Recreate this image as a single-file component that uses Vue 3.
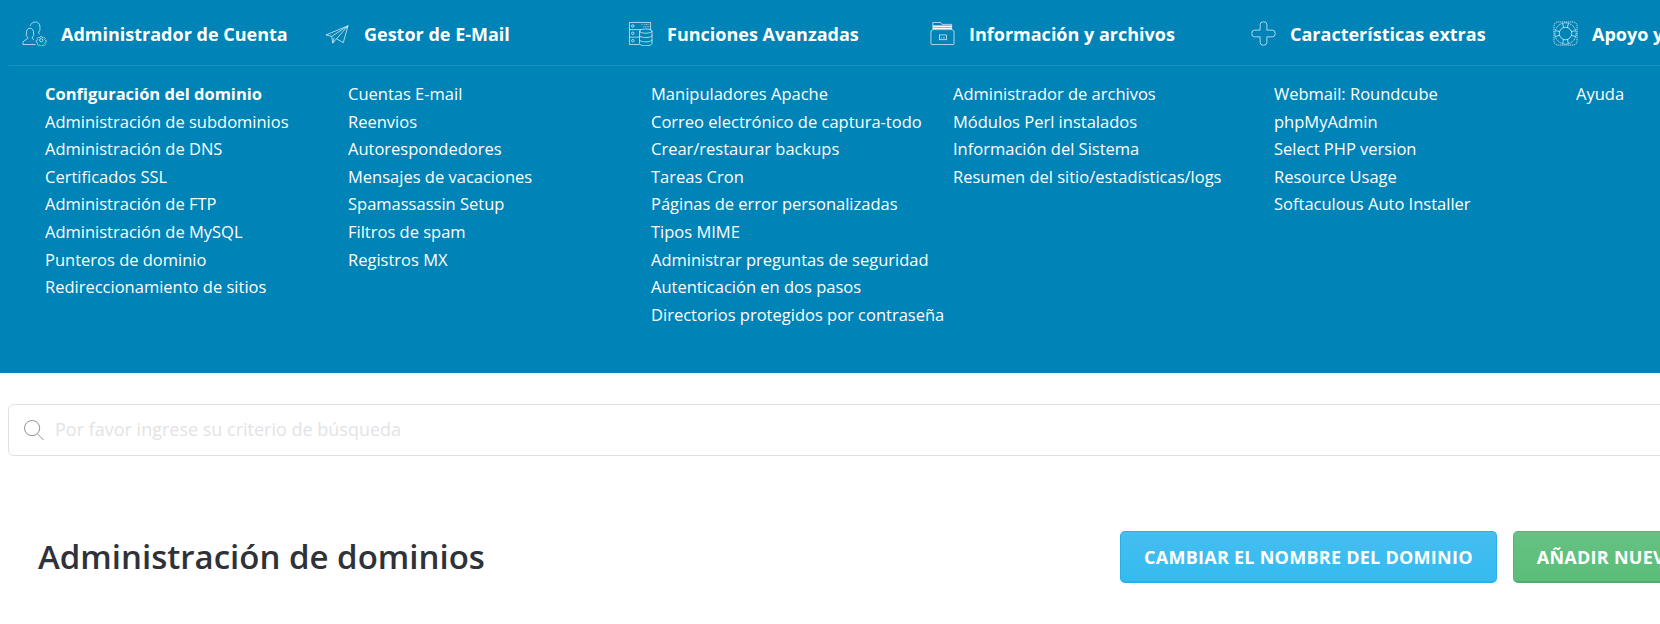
<template>
  <div class="page">
    <nav class="menu">
      <div class="menu-head cols">
        <div v-for="col in columns" :key="col.title" class="head-item">
          <svg class="head-icon" viewBox="0 0 26 26" fill="none" stroke="#fff" stroke-width="0.7">
            <template v-if="col.icon === 'users'">
              <path d="M1 24.500h13M1 24.500v-1.800c0-1.600 1.200-2.400 3.200-3.200 1.200-.5 1.800-1 1.800-1.800 0-.6-.5-1-1-2-.6-.4-.8-1.400-.4-2-.4-3.700 1-6.200 3.700-6.200s4.100 2.500 3.700 6.200c.4.600.2 1.600-.4 2-.4 1-1 1.400-1 2 0 .8.600 1.300 1.800 1.800" />
              <path d="M8.500 5C9.500 2.500 11.500 1 14 1c3.400 0 5 3 4.600 7 .4.600.3 1.500-.3 2-.4 1-1.100 1.500-1.100 2.300 0 .6.400 1 1.100 1.400" />
              <circle cx="20" cy="20" r="1.700" />
              <path d="M19 14.500h2l.4 1.400 1.200.5 1.300-.7 1.400 1.400-.7 1.300.5 1.200 1.400.4v2l-1.400.4-.5 1.200.7 1.300-1.400 1.400-1.300-.7-1.200.5-.4 1.100h-2l-.4-1.100-1.200-.5-1.300.7-1.400-1.400.7-1.300-.5-1.200-1.400-.4v-2l1.400-.4.5-1.200-.7-1.300 1.400-1.400 1.300.7 1.200-.5z" transform="translate(4 4.400) scale(.8)" />
            </template>
            <template v-else-if="col.icon === 'plane'">
              <path d="M1 14.500 24 5 19 22.500l-7-4-4 4.500-1-7z" />
              <path d="M24 5 7 16M24 5 12 18.500M8 23l1.500-5.500" />
            </template>
            <template v-else-if="col.icon === 'db'">
              <path d="M12 24.500H1.500v-23h22v8M1.500 9h12M1.500 16.800h10" />
              <circle cx="5" cy="5.200" r="1.300" />
              <circle cx="5" cy="12.800" r="1.300" />
              <circle cx="5" cy="20.500" r="1.300" />
              <path d="M14 3.500h1M16 6h6M17 3.500h5" stroke-dasharray="1 .7" />
              <ellipse cx="18.500" cy="10.500" rx="6.500" ry="2.200" />
              <path d="M12 10.500v13c0 1.300 3 2.200 6.500 2.200s6.500-.9 6.500-2.200v-13M12 15c0 1.300 3 2.200 6.500 2.200S25 16.300 25 15M12 19.500c0 1.300 3 2.200 6.500 2.200s6.500-.9 6.500-2.200" />
            </template>
            <template v-else-if="col.icon === 'folder'">
              <path d="M3 9V1.500h8l1.500 2h10V9" />
              <path d="M3 5.500h19.500M3 7.500h19.500" stroke-width="1.500" />
              <path d="M1 10.500 3 9h20l2 1.500v13a1 1 0 0 1-1 1H2a1 1 0 0 1-1-1z" />
              <rect x="10" y="14.500" width="7" height="5" />
              <path d="M11.500 17.500h1M13.500 17.500h2" />
            </template>
            <template v-else-if="col.icon === 'plus'">
              <path d="M9.500 3.500a3.500 2.700 0 0 1 7 0v6h6a2.700 3.500 0 0 1 0 7h-6v6a3.500 2.700 0 0 1-7 0v-6h-6a2.700 3.500 0 0 1 0-7h6z" />
            </template>
            <template v-else>
              <rect x="1" y="1" width="24" height="24" rx="4" stroke-dasharray="1.500 .6" />
              <circle cx="13" cy="13" r="6.500" />
              <circle cx="13" cy="13" r="11" stroke-dasharray="1.500 .5" />
              <path d="M10 2.500l1 4.500M16 2.500 15 7M10 23.500l1-4.500M16 23.500 15 19M2.500 10 7 11M2.500 16 7 15M23.500 10 19 11M23.500 16 19 15" />
            </template>
          </svg>
          <span class="head-title">{{ col.title }}</span>
        </div>
      </div>
      <div class="menu-body cols">
        <ul v-for="col in columns" :key="col.title" class="link-list">
          <li v-for="(link, i) in col.links" :key="link" :class="{ active: col.icon === 'users' && i === 0 }">{{ link }}</li>
        </ul>
      </div>
    </nav>

    <div class="search">
      <svg class="search-icon" viewBox="0 0 21 22" fill="none" stroke="#8c8c8c" stroke-width="1">
        <circle cx="8.500" cy="8.500" r="8" />
        <path d="M14.200 14.500 20.500 21" />
      </svg>
      <input class="search-input" type="text" placeholder="Por favor ingrese su criterio de búsqueda" />
    </div>

    <div class="title-row">
      <h1 class="page-title">Administración de dominios</h1>
      <div class="actions">
        <button class="btn btn-blue">Cambiar el nombre del dominio</button>
        <button class="btn btn-green">Añadir nuevo dominio</button>
      </div>
    </div>
  </div>
</template>

<script setup>
const columns = [
  {
    title: 'Administrador de Cuenta',
    icon: 'users',
    links: [
      'Configuración del dominio',
      'Administración de subdominios',
      'Administración de DNS',
      'Certificados SSL',
      'Administración de FTP',
      'Administración de MySQL',
      'Punteros de dominio',
      'Redireccionamiento de sitios'
    ]
  },
  {
    title: 'Gestor de E-Mail',
    icon: 'plane',
    links: [
      'Cuentas E-mail',
      'Reenvios',
      'Autorespondedores',
      'Mensajes de vacaciones',
      'Spamassassin Setup',
      'Filtros de spam',
      'Registros MX'
    ]
  },
  {
    title: 'Funciones Avanzadas',
    icon: 'db',
    links: [
      'Manipuladores Apache',
      'Correo electrónico de captura-todo',
      'Crear/restaurar backups',
      'Tareas Cron',
      'Páginas de error personalizadas',
      'Tipos MIME',
      'Administrar preguntas de seguridad',
      'Autenticación en dos pasos',
      'Directorios protegidos por contraseña'
    ]
  },
  {
    title: 'Información y archivos',
    icon: 'folder',
    links: [
      'Administrador de archivos',
      'Módulos Perl instalados',
      'Información del Sistema',
      'Resumen del sitio/estadísticas/logs'
    ]
  },
  {
    title: 'Características extras',
    icon: 'plus',
    links: [
      'Webmail: Roundcube',
      'phpMyAdmin',
      'Select PHP version',
      'Resource Usage',
      'Softaculous Auto Installer'
    ]
  },
  {
    title: 'Apoyo y ayuda',
    icon: 'help',
    links: ['Ayuda']
  }
]
</script>

<style>
html, body {
  overflow: hidden;
}
</style>

<style scoped>
.page {
  width: 1660px;
  height: 624px;
  overflow: hidden;
  background: #fff;
  font-family: "Open Sans", sans-serif;
}

.menu {
  height: 373px;
  background: #0083b6;
  padding-left: 8px;
  box-sizing: border-box;
  color: #fff;
}

.cols {
  display: grid;
  grid-template-columns: 303px 303px 302px 321px 302px 300px;
  width: 1900px;
}

.menu-head {
  height: 63px;
  padding: 2px 0 0 14px;
  align-items: center;
  border-bottom: 1px solid #1491c1;
  box-sizing: content-box;
}

.head-item {
  display: flex;
  align-items: center;
  gap: 14px;
}

.head-icon {
  width: 25px;
  height: 25px;
  flex: none;
}

.head-title {
  font-size: 18px;
  font-weight: 700;
  white-space: nowrap;
}

.menu-body {
  padding: 14px 0 0 37px;
}

.link-list {
  list-style: none;
  margin: 0;
  padding: 0;
}

.link-list li {
  font-size: 16.5px;
  line-height: 27.6px;
  white-space: nowrap;
}

.link-list li.active {
  font-weight: 700;
}

.search {
  display: flex;
  align-items: center;
  gap: 11px;
  width: 1800px;
  height: 50px;
  margin: 31px 0 0 8px;
  padding-left: 15px;
  border: 1px solid #e1e1e3;
  border-radius: 6px;
}

.search-icon {
  width: 20px;
  height: 21px;
  flex: none;
}

.search-input {
  flex: 1;
  border: none;
  outline: none;
  background: transparent;
  padding: 0 0 2px;
  font-family: inherit;
  font-size: 18px;
}

.search-input::placeholder {
  color: #e3e3e5;
  opacity: 1;
}

.title-row {
  display: flex;
  align-items: center;
  width: 1900px;
  margin-top: 75px;
  padding-left: 38px;
}

.page-title {
  flex: 0 0 1082px;
  margin: 0 0 1px;
  font-size: 33px;
  font-weight: 600;
  color: #2f3238;
}

.actions {
  display: flex;
  gap: 16px;
}

.btn {
  height: 52px;
  padding: 0 23px;
  border: 1px solid transparent;
  border-radius: 5px;
  font-family: inherit;
  font-size: 18px;
  font-weight: 700;
  letter-spacing: 0.26px;
  text-transform: uppercase;
  white-space: nowrap;
  color: #fff;
}

.btn-blue {
  background: linear-gradient(#45bef0, #35bbf0);
  border-color: #2aaee6 #2aaee6 #1eb4ee;
  border-bottom-width: 2px;
}

.btn-green {
  background: linear-gradient(#66c283, #5bbd79);
  border-color: #55b373 #55b373 #4fae6d;
  border-bottom-width: 2px;
}
</style>
